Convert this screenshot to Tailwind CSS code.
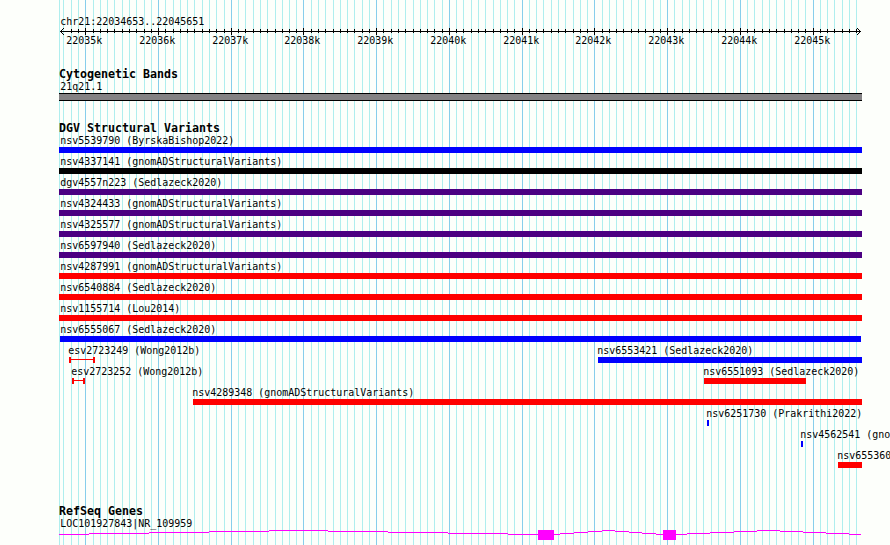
<!DOCTYPE html>
<html lang="en"><head><meta charset="utf-8"><title>chr21:22034653..22045651</title>
<script src="https://cdn.jsdelivr.net/npm/@tailwindcss/browser@4"></script></head>
<body class="bg-[#fdfffb] overflow-hidden">
<main class="relative w-[890px] h-[545px] overflow-hidden bg-[#fdfffb]">
<svg id="map" width="890" height="545" viewBox="0 0 890 545" shape-rendering="crispEdges" class="block font-['DejaVu_Sans_Mono',monospace] text-[10px]"></svg>
</main>
<script>
const svg=document.getElementById('map'),NS='http://www.w3.org/2000/svg';
function add(n,a,t){const e=document.createElementNS(NS,n);for(const k in a)e.setAttribute(k,a[k]);if(t!==undefined)e.textContent=t;svg.appendChild(e);return e}
function rect(x,y,w,h,f){add('rect',{x,y,width:w,height:h,fill:f})}
function label(x,y,t){add('text',{x:x+.3,y,textLength:t.length*6,lengthAdjust:'spacingAndGlyphs','font-size':10.5,fill:'#000'},t)}
function title(y,t){add('text',{x:59,y,textLength:t.length*7,lengthAdjust:'spacingAndGlyphs','font-size':11.6,'font-weight':700,fill:'#000'},t)}
const majors=[85,158,231,303,376,449,522,594,667,740,813];
const ticks=[];
for(let k=-3;k<=106;k++){const m=Math.floor(k/10),r=((k%10)+10)%10;ticks.push(r===0?[majors[m],1]:[Math.floor(85.68+k*7.2742+(k>-3&&k<30?.2:0)),0])}
rect(59,0,1,545,'#afeeee');
ticks.forEach(([x,m])=>rect(x,0,1,545,m?'#87ceeb':'#afeeee'));
rect(60,31,801,1,'#000');
ticks.forEach(([x,m])=>{if(x>63&&x<857)rect(x,m?28:29,1,m?7:4,'#000')});
for(let i=1;i<4;i++){rect(60+i,31-i,1,1,'#000');rect(60+i,31+i,1,1,'#000');rect(860-i,31-i,1,1,'#000');rect(860-i,31+i,1,1,'#000')}
label(60,25,'chr21:22034653..22045651');
majors.forEach((x,i)=>label(x-19,44,(22035+i)+'k'));
title(78,'Cytogenetic Bands');label(60,90,'21q21.1');
rect(59,93,803,8,'#000');rect(59,94,803,6,'#848284');
title(132,'DGV Structural Variants');
const B='#0000ff',R='#ff0000',P='#4b0082';
[['nsv5539790 (ByrskaBishop2022)',B,59],['nsv4337141 (gnomADStructuralVariants)','#000',59],['dgv4557n223 (Sedlazeck2020)',P,59],['nsv4324433 (gnomADStructuralVariants)',P,59],['nsv4325577 (gnomADStructuralVariants)',P,59],['nsv6597940 (Sedlazeck2020)',P,59],['nsv4287991 (gnomADStructuralVariants)',R,59],['nsv6540884 (Sedlazeck2020)',R,59],['nsv1155714 (Lou2014)',R,59],['nsv6555067 (Sedlazeck2020)',B,60]].forEach(([t,c,x],i)=>{label(60,144+21*i,t);rect(x,147+21*i,(x===60?861:862)-x,6,c)});
[[68,354,'esv2723249 (Wong2012b)'],[71,375,'esv2723252 (Wong2012b)'],[597,354,'nsv6553421 (Sedlazeck2020)'],[703,375,'nsv6551093 (Sedlazeck2020)'],[192,396,'nsv4289348 (gnomADStructuralVariants)'],[706,417,'nsv6251730 (Prakrithi2022)'],[800,438,'nsv4562541 (gno'],[837,459,'nsv655360']].forEach(a=>label(...a));
rect(69,359,26,1,R);rect(69,357,2,6,R);rect(93,357,2,6,R);
rect(72,380,13,1,R);rect(72,378,2,6,R);rect(83,378,2,6,R);
rect(598,357,264,6,B);rect(704,378,102,6,R);rect(193,399,669,6,R);rect(707,420,2,6,B);rect(801,441,2,6,B);rect(838,462,24,6,R);
title(515,'RefSeq Genes');label(60,527,'LOC101927843|NR_109959');
const M='#ff00ff';
[[59,89,534],[89,149,533],[149,209,532],[209,269,531],[269,328,530],[328,388,531],[388,448,532],[448,508,533],[508,560,534],[560,574,533],[574,588,532],[588,602,531],[602,615,530],[615,629,531],[629,642,532],[642,656,533],[656,687,534],[687,710,533],[710,734,532],[734,757,531],[757,780,530],[780,803,531],[803,826,532],[826,849,533],[849,861,534]].forEach(([a,b,y])=>rect(a,y,b-a,1,M));
rect(538,530,16,10,M);rect(663,530,13,10,M);
</script></body></html>
